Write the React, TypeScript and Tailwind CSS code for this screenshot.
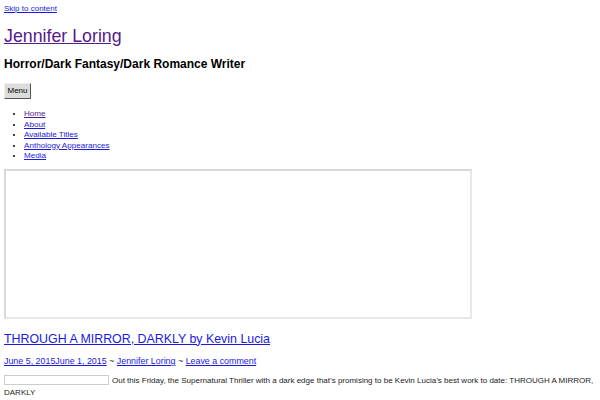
const navItems = ["Home", "About", "Available Titles", "Anthology Appearances", "Media"];

export default function App() {
  return (
    <div className="min-h-screen bg-white px-1 text-black font-['Liberation_Sans',Arial,sans-serif]">
      <a href="#content" className="block pt-1 text-[8px] leading-[10px] text-[#1a1ae0] underline">
        Skip to content
      </a>

      <header>
        <h1 className="mt-[11px] text-[17.8px] leading-[22px]">
          <a href="#" className="text-[#551a8b] underline">Jennifer Loring</a>
        </h1>
        <p className="mt-[10px] text-[12px] font-bold leading-[14px]">
          Horror/Dark Fantasy/Dark Romance Writer
        </p>

        <nav>
          <button className="mt-[12px] block h-[16px] w-[27px] border border-t-[#eee] border-l-[#eee] border-r-[#555] border-b-[#555] bg-[#dcdcdc] text-[8px] leading-none text-black">
            Menu
          </button>
          <ul className="mt-[10px] list-disc pl-[20px] text-[8.1px] leading-[10.5px]">
            {navItems.map((item, i) => (
              <li key={item}>
                <a href="#" className={i === 0 ? "text-[#551a8b] underline" : "text-[#1a1ae0] underline"}>
                  {item}
                </a>
              </li>
            ))}
          </ul>
        </nav>
      </header>

      {/* embedded media frame */}
      <div className="mt-[7px] h-[150px] w-[468px] border-2 border-t-[#d8d8d8] border-l-[#d8d8d8] border-r-[#e8e8e8] border-b-[#e8e8e8]" />

      <article id="content">
        <h2 className="mt-[12px] text-[12.4px] leading-[16px]">
          <a href="#" className="text-[#1a1ae0] underline">THROUGH A MIRROR, DARKLY by Kevin Lucia</a>
        </h2>
        <div className="mt-[9.5px] text-[8.9px] leading-[11px] text-[#333]">
          <a href="#" className="text-[#1a1ae0] underline">June 5, 2015June 1, 2015</a> ~{" "}
          <a href="#" className="text-[#1a1ae0] underline">Jennifer Loring</a> ~{" "}
          <a href="#" className="text-[#1a1ae0] underline">Leave a comment</a>
        </div>
        <p className="mt-[7.5px] text-[8px] leading-[12px] text-[#222]">
          <span className="mr-[3px] inline-block h-[10px] w-[105px] border border-[#ccc] align-middle" />
          Out this Friday, the Supernatural Thriller with a dark edge that’s promising to be Kevin Lucia’s best work to date: THROUGH A MIRROR, DARKLY
        </p>
      </article>
    </div>
  );
}
